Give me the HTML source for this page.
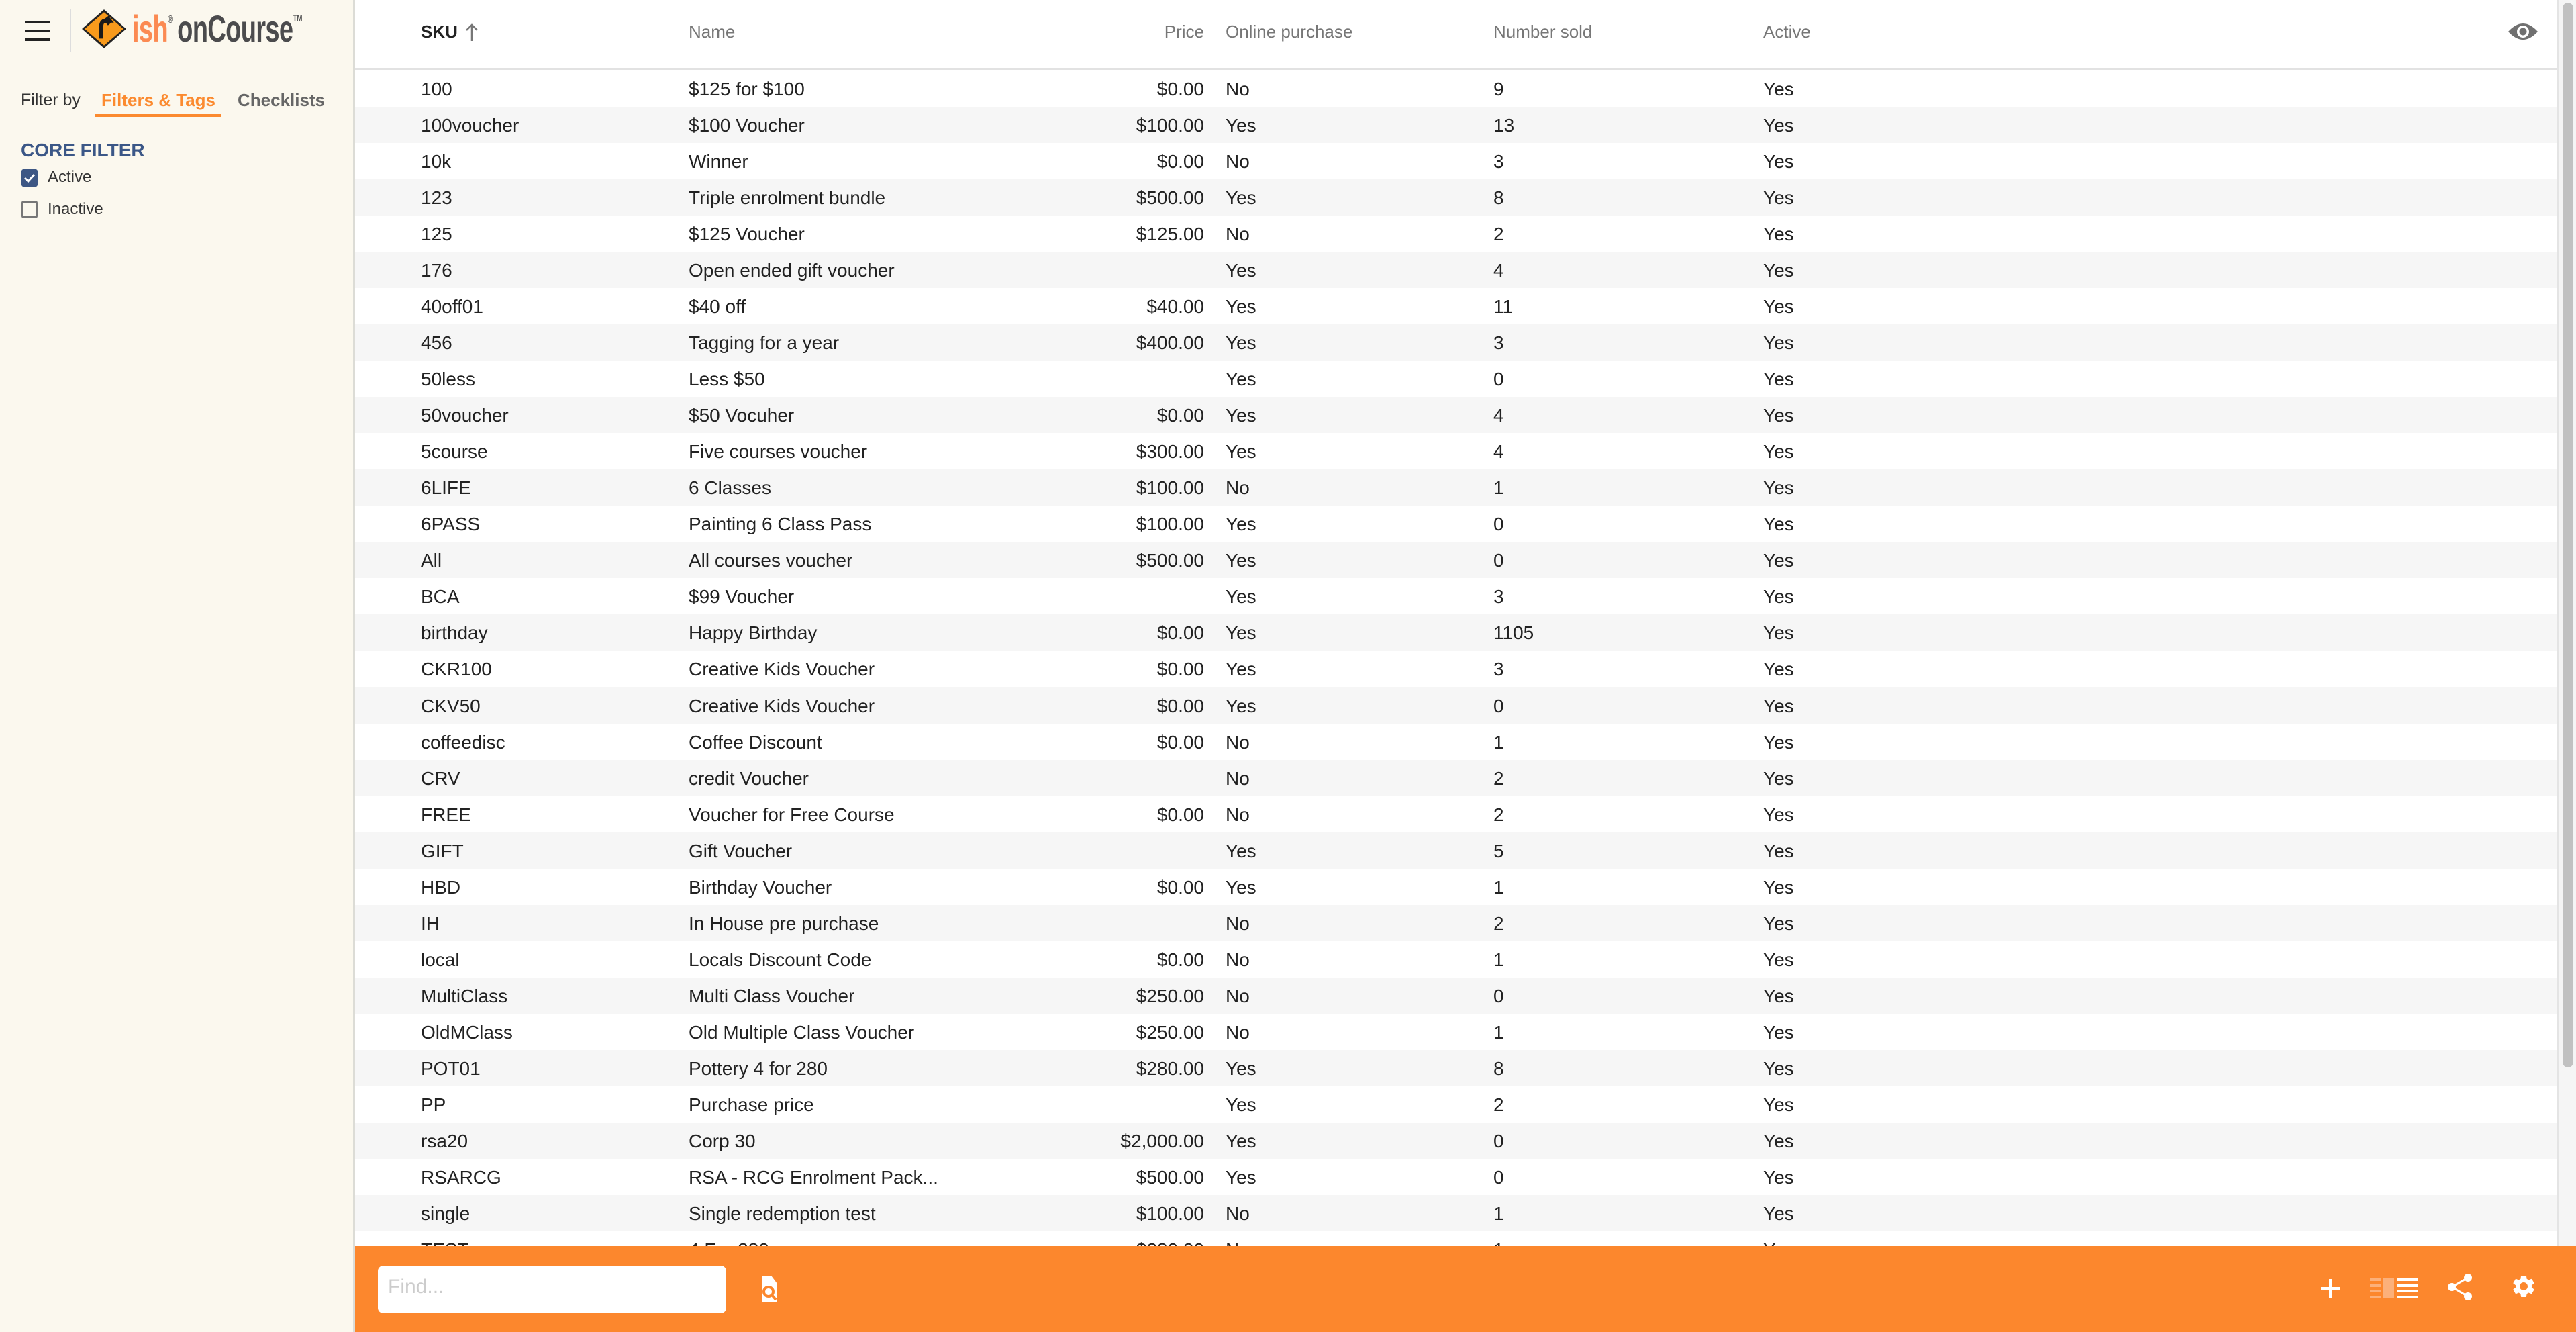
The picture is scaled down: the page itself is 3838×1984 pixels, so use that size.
<!DOCTYPE html>
<html><head><meta charset="utf-8">
<style>
*{margin:0;padding:0;box-sizing:border-box}
html,body{width:3838px;height:1984px;overflow:hidden;background:#fff;font-family:"Liberation Sans",sans-serif}
#side{position:absolute;left:0;top:0;width:529px;height:1984px;background:#fbf8ee;border-right:3px solid #dcdcd6}
.hb{position:absolute;left:37px;width:38px;height:4px;background:#222}
#main{position:absolute;left:529px;top:0;width:3281px;height:1984px}
.hdr{position:absolute;top:0;left:0;width:3281px;height:105px;border-bottom:3px solid #e2e2e2}
.h{position:absolute;top:32px;font-size:26px;color:#777}
.row{position:absolute;left:0;width:3281px;height:54.03px;font-size:28px;color:#222}
.row div{position:absolute;top:12px;white-space:nowrap}
.g{background:#f6f6f6}
.c1{left:98px}.c2{left:497px}.c3{right:2016px;text-align:right}.c4{left:1297px}.c5{left:1696px}.c6{left:2098px}
#bar{position:absolute;left:529px;top:1856px;width:3309px;height:128px;background:#fc872d}
#sb{position:absolute;left:3810px;top:0;width:28px;height:1856px;background:#f5f5f5;border-left:2px solid #e4e4e4}
</style></head><body>
<div id="side">
  <div class="hb" style="top:31px"></div><div class="hb" style="top:44px"></div><div class="hb" style="top:57px"></div>
  <div style="position:absolute;left:104px;top:14px;width:2px;height:64px;background:#ddd"></div>
  <svg style="position:absolute;left:120px;top:12px" width="70" height="62" viewBox="0 0 68 60">
    <polygon points="34,2 66,30 34,58 2,30" fill="#222"/>
    <polygon points="34,6 62,30 34,54 6,30" fill="#f89a1c"/>
    <path d="M30 44 V26 Q30 18 38 18 H42 L38 13 M38 18 L42 23" stroke="#1a1a1a" stroke-width="6" fill="none"/>
  </svg>
  <div style="position:absolute;left:197px;top:10px;font-weight:bold;font-size:56px;letter-spacing:-1px;white-space:nowrap;transform:scaleX(0.68);transform-origin:0 0"><span style="color:#fb8a52">ish</span><sup style="font-size:16px;color:#555;vertical-align:28px">®</sup><span style="color:#4b4b4d;margin-left:10px">onCourse</span><sup style="font-size:15px;color:#555;vertical-align:30px">TM</sup></div>
  <div style="position:absolute;left:31px;top:135px;font-size:25px;color:#333">Filter by</div>
  <div style="position:absolute;left:151px;top:134px;font-size:26px;color:#fb8a2f;font-weight:bold">Filters &amp; Tags</div>
  <div style="position:absolute;left:142px;top:170px;width:188px;height:4px;background:#fb8a2f"></div>
  <div style="position:absolute;left:354px;top:134px;font-size:26px;color:#666;font-weight:bold">Checklists</div>
  <div style="position:absolute;left:31px;top:208px;font-size:28px;color:#3b5787;font-weight:bold">CORE FILTER</div>
  <div style="position:absolute;left:32px;top:252px;width:24px;height:26px;background:#3d5784;border-radius:3px"></div>
  <svg style="position:absolute;left:34px;top:255px" width="20" height="20"><path d="M3 10 L8 15 L17 5" stroke="#fff" stroke-width="3" fill="none"/></svg>
  <div style="position:absolute;left:71px;top:250px;font-size:24px;color:#333">Active</div>
  <div style="position:absolute;left:32px;top:299px;width:24px;height:26px;border:3px solid #777;border-radius:3px"></div>
  <div style="position:absolute;left:71px;top:298px;font-size:24px;color:#333">Inactive</div>
</div>
<div id="main">
  <div class="hdr">
    <div class="h" style="left:98px;color:#222;font-weight:bold">SKU</div>
    <svg style="position:absolute;left:164px;top:34px" width="20" height="28"><path d="M10 27 V3 M2 11 L10 3 L18 11" stroke="#777" stroke-width="2.5" fill="none"/></svg>
    <div class="h" style="left:497px">Name</div>
    <div class="h" style="right:2016px">Price</div>
    <div class="h" style="left:1297px">Online purchase</div>
    <div class="h" style="left:1696px">Number sold</div>
    <div class="h" style="left:2098px">Active</div>
    <svg style="position:absolute;left:3208px;top:32px" width="44" height="30" viewBox="0 0 44 30"><path d="M0 15 Q22 -9 44 15 Q22 39 0 15Z" fill="#707070"/><circle cx="22" cy="15" r="9" fill="#fff"/><circle cx="22" cy="15" r="5.5" fill="#707070"/></svg>
  </div>
  <div id="rows"></div>
</div>
<div id="sb"><div style="position:absolute;left:6px;top:4px;width:16px;height:1586px;background:#c1c1c1;border-radius:8px"></div></div>
<div id="bar">
  <div style="position:absolute;left:34px;top:29px;width:519px;height:71px;background:#fff;border-radius:8px"></div>
  <div style="position:absolute;left:49px;top:44px;font-size:30px;color:#ccc">Find...</div>
  <svg style="position:absolute;left:604px;top:44px" width="26" height="42" viewBox="0 0 26 42"><path d="M2 0 H16 L25 12 V40 H2Z" fill="#fff"/><circle cx="12" cy="24" r="7" stroke="#fc872d" stroke-width="4" fill="none"/><path d="M17 29 L23 36" stroke="#fc872d" stroke-width="4"/></svg>
  <svg style="position:absolute;left:2927px;top:47px" width="32" height="32"><path d="M16 2 V30 M2 16 H30" stroke="#fff" stroke-width="4"/></svg>
  <svg style="position:absolute;left:3002px;top:48px" width="74" height="30" viewBox="0 0 74 30">
    <g fill="#fcb07a"><rect x="0" y="0" width="16" height="4"/><rect x="0" y="9" width="16" height="4"/><rect x="0" y="17" width="16" height="4"/><rect x="0" y="26" width="16" height="4"/><rect x="20" y="0" width="16" height="30"/></g>
    <g fill="#fff"><rect x="40" y="0" width="32" height="4"/><rect x="40" y="9" width="32" height="4"/><rect x="40" y="17" width="32" height="4"/><rect x="40" y="26" width="32" height="4"/></g>
  </svg>
  <svg style="position:absolute;left:3117px;top:40px" width="40" height="42" viewBox="0 0 40 42"><circle cx="31" cy="7" r="6" fill="#fff"/><circle cx="7" cy="21" r="6" fill="#fff"/><circle cx="31" cy="35" r="6" fill="#fff"/><path d="M31 7 L7 21 L31 35" stroke="#fff" stroke-width="3" fill="none"/></svg>
  <svg style="position:absolute;left:3211px;top:40px" width="40" height="40" viewBox="0 0 24 24"><path fill="#fff" d="M19.14 12.94c.04-.3.06-.61.06-.94 0-.32-.02-.64-.07-.94l2.030-1.58a.49.49 0 0 0 .12-.61l-1.92-3.32a.488.488 0 0 0-.59-.22l-2.39.96c-.5-.38-1.03-.7-1.62-.94l-.36-2.54a.484.484 0 0 0-.48-.41h-3.84c-.24 0-.43.17-.47.41l-.36 2.54c-.59.24-1.13.57-1.62.94l-2.39-.96c-.22-.08-.47 0-.59.22L2.74 8.87c-.12.21-.08.47.12.61l2.03 1.58c-.05.3-.09.63-.09.94s.02.64.07.94l-2.03 1.58a.49.49 0 0 0-.12.61l1.92 3.32c.12.22.37.29.59.22l2.39-.96c.5.38 1.03.7 1.620.94l.36 2.54c.05.24.24.41.48.41h3.84c.24 0 .44-.17.47-.41l.36-2.54c.59-.24 1.13-.56 1.62-.94l2.39.96c.22.08.47 0 .59-.22l1.92-3.32c.12-.22.07-.47-.12-.61l-2.01-1.58zM12 15.6c-1.98 0-3.6-1.62-3.6-3.6s1.62-3.6 3.6-3.6 3.6 1.62 3.6 3.6-1.62 3.6-3.6 3.6z"/></svg>
</div>
<script>
var d=[["100","$125 for $100","$0.00","No","9"],["100voucher","$100 Voucher","$100.00","Yes","13"],["10k","Winner","$0.00","No","3"],["123","Triple enrolment bundle","$500.00","Yes","8"],["125","$125 Voucher","$125.00","No","2"],["176","Open ended gift voucher","","Yes","4"],["40off01","$40 off","$40.00","Yes","11"],["456","Tagging for a year","$400.00","Yes","3"],["50less","Less $50","","Yes","0"],["50voucher","$50 Vocuher","$0.00","Yes","4"],["5course","Five courses voucher","$300.00","Yes","4"],["6LIFE","6 Classes","$100.00","No","1"],["6PASS","Painting 6 Class Pass","$100.00","Yes","0"],["All","All courses voucher","$500.00","Yes","0"],["BCA","$99 Voucher","","Yes","3"],["birthday","Happy Birthday","$0.00","Yes","1105"],["CKR100","Creative Kids Voucher","$0.00","Yes","3"],["CKV50","Creative Kids Voucher","$0.00","Yes","0"],["coffeedisc","Coffee Discount","$0.00","No","1"],["CRV","credit Voucher","","No","2"],["FREE","Voucher for Free Course","$0.00","No","2"],["GIFT","Gift Voucher","","Yes","5"],["HBD","Birthday Voucher","$0.00","Yes","1"],["IH","In House pre purchase","","No","2"],["local","Locals Discount Code","$0.00","No","1"],["MultiClass","Multi Class Voucher","$250.00","No","0"],["OldMClass","Old Multiple Class Voucher","$250.00","No","1"],["POT01","Pottery 4 for 280","$280.00","Yes","8"],["PP","Purchase price","","Yes","2"],["rsa20","Corp 30","$2,000.00","Yes","0"],["RSARCG","RSA - RCG Enrolment Pack...","$500.00","Yes","0"],["single","Single redemption test","$100.00","No","1"],["TEST","4 For 280","$280.00","No","1"]];
var h="";d.forEach(function(r,i){h+='<div class="row'+(i%2?' g':'')+'" style="top:'+(105+i*54.03)+'px"><div class="c1">'+r[0]+'</div><div class="c2">'+r[1]+'</div><div class="c3">'+r[2]+'</div><div class="c4">'+r[3]+'</div><div class="c5">'+r[4]+'</div><div class="c6">Yes</div></div>';});
document.getElementById("rows").innerHTML=h;
</script>
</body></html>
